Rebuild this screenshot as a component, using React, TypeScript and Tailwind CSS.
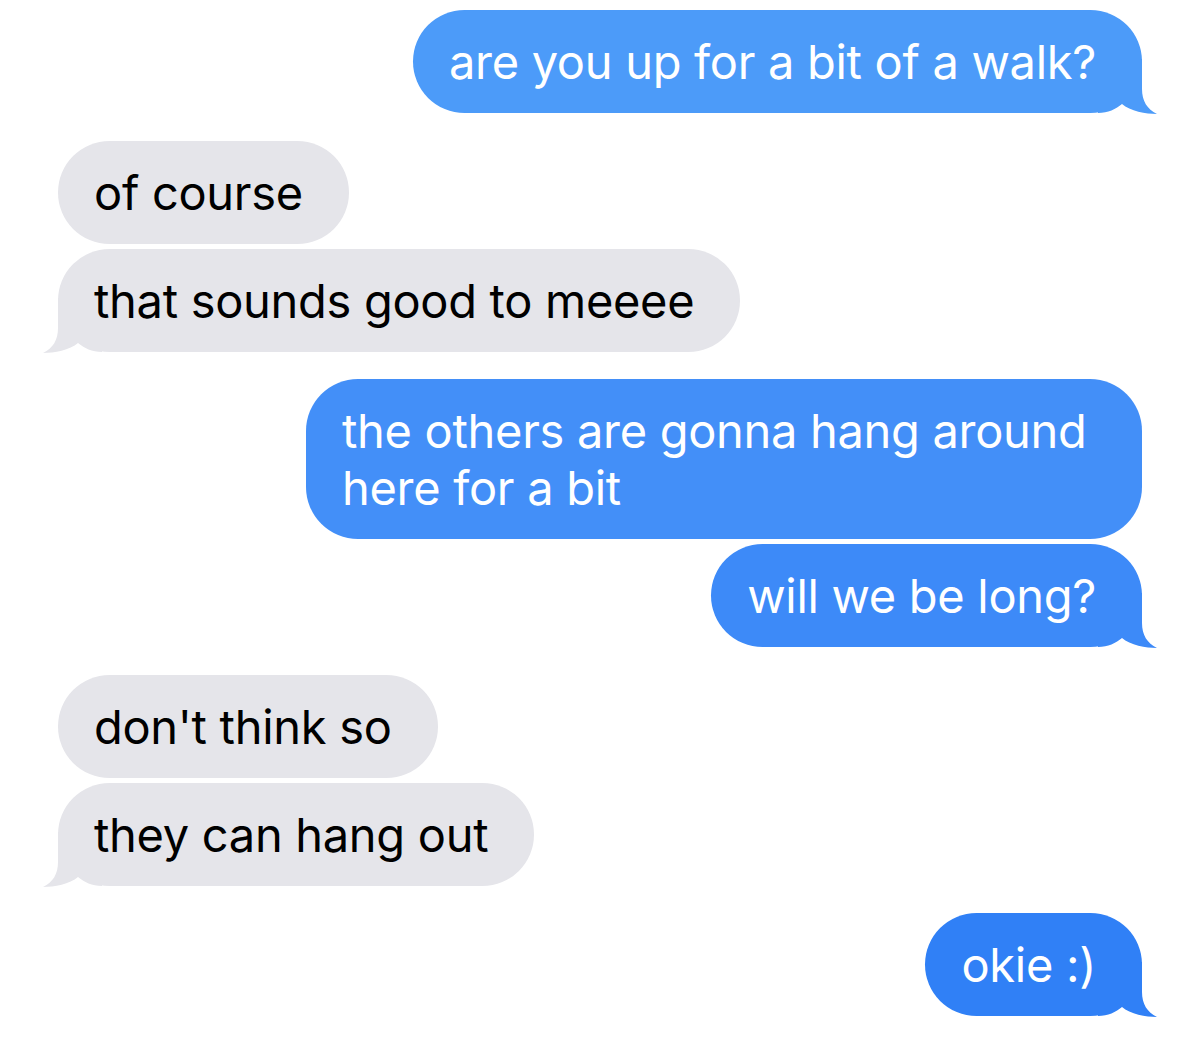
import React from "react";

function Tail({ side, fill }: { side: "left" | "right"; fill: string }) {
  const d =
    "M0 54 L0 0 L44 0 L44 30 C44 42 49 50 59 55 C48 55 32 52 24 45 C18 50 10 54 0 54 Z";
  return (
    <svg
      width="60"
      height="55"
      viewBox="0 0 60 55"
      className={
        side === "right"
          ? "absolute -right-[16px] -bottom-[1px]"
          : "absolute -left-[16px] -bottom-[1px] -scale-x-100"
      }
    >
      <path d={d} fill={fill} />
    </svg>
  );
}

function Sent({ text, tail, fill, cls }: { text: React.ReactNode; tail?: boolean; fill: string; cls: string }) {
  return (
    <div className="flex justify-end">
      <div className={`relative max-w-[836px] rounded-[52px] pl-[36px] pr-[46px] py-[23px] text-white ${cls}`}>
        <span className="relative z-10">{text}</span>
        {tail && <Tail side="right" fill={fill} />}
      </div>
    </div>
  );
}

function Recv({ text, tail }: { text: React.ReactNode; tail?: boolean }) {
  return (
    <div className="flex justify-start">
      <div className="relative rounded-[52px] bg-[#e5e5ea] pl-[36px] pr-[46px] py-[23px] text-black">
        <span className="relative z-10">{text}</span>
        {tail && <Tail side="left" fill="#e5e5ea" />}
      </div>
    </div>
  );
}

export default function App() {
  return (
    <div
      className="w-[1200px] h-[1048px] bg-white overflow-hidden px-[58px] pt-[10px] text-[47px] leading-[57px] tracking-[-0.3px]"
      style={{ fontFamily: "Inter, 'Noto Sans', sans-serif" }}
    >
      <div className="flex flex-col">
        <Sent text="are you up for a bit of a walk?" tail fill="#4c9bf9" cls="bg-[#4c9bf9]" />

        <div className="mt-[28px] flex flex-col gap-[5px]">
          <Recv text="of course" />
          <Recv text="that sounds good to meeee" tail />
        </div>

        <div className="mt-[27px] flex flex-col gap-[5px]">
          <Sent text="the others are gonna hang around here for a bit" fill="#438ff8" cls="bg-[#438ff8]" />
          <Sent text="will we be long?" tail fill="#3d8af8" cls="bg-[#3d8af8]" />
        </div>

        <div className="mt-[28px] flex flex-col gap-[5px]">
          <Recv text="don't think so" />
          <Recv text="they can hang out" tail />
        </div>

        <div className="mt-[27px] flex flex-col">
          <Sent text="okie :)" tail fill="#3080f6" cls="bg-[#3080f6]" />
        </div>
      </div>
    </div>
  );
}
